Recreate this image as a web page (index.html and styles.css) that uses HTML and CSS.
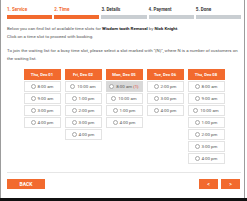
FILE: index.html
```html
<!DOCTYPE html>
<html>
<head>
<meta charset="utf-8">
<link rel="stylesheet" href="styles.css">
</head>
<body>
<div class="panel">
  <div class="steps">
    <div class="step done"><span class="label">1. Service</span><span class="bar"></span></div>
    <div class="step done"><span class="label">2. Time</span><span class="bar"></span></div>
    <div class="step"><span class="label">3. Details</span><span class="bar"></span></div>
    <div class="step"><span class="label">4. Payment</span><span class="bar"></span></div>
    <div class="step"><span class="label">5. Done</span><span class="bar"></span></div>
  </div>
  <p class="text">Below you can find list of available time slots for <b>Wisdom tooth Removal</b> by <b>Nick Knight</b>.<br>Click on a time slot to proceed with booking.</p>
  <p class="text">To join the waiting list for a busy time slot, please select a slot marked with "(N)", where N is a number of customers on the waiting list.</p>
  <div class="columns">
    <div class="col">
      <div class="day">Thu, Dec 01</div>
      <div class="slot"><span class="radio"></span>8:00 am</div>
      <div class="slot"><span class="radio"></span>9:00 am</div>
      <div class="slot"><span class="radio"></span>3:00 pm</div>
      <div class="slot"><span class="radio"></span>4:00 pm</div>
    </div>
    <div class="col">
      <div class="day">Fri, Dec 02</div>
      <div class="slot"><span class="radio"></span>10:00 am</div>
      <div class="slot"><span class="radio"></span>1:00 pm</div>
      <div class="slot"><span class="radio"></span>2:00 pm</div>
      <div class="slot"><span class="radio"></span>3:00 pm</div>
      <div class="slot"><span class="radio"></span>4:00 pm</div>
    </div>
    <div class="col">
      <div class="day">Mon, Dec 05</div>
      <div class="slot busy"><span class="radio"></span>8:00 am <span class="count">(1)</span></div>
      <div class="slot"><span class="radio"></span>10:00 am</div>
      <div class="slot"><span class="radio"></span>1:00 pm</div>
      <div class="slot"><span class="radio"></span>4:00 pm</div>
    </div>
    <div class="col">
      <div class="day">Tue, Dec 06</div>
      <div class="slot"><span class="radio"></span>2:00 pm</div>
      <div class="slot"><span class="radio"></span>3:00 pm</div>
      <div class="slot"><span class="radio"></span>4:00 pm</div>
    </div>
    <div class="col">
      <div class="day">Thu, Dec 08</div>
      <div class="slot"><span class="radio"></span>8:00 am</div>
      <div class="slot"><span class="radio"></span>9:00 am</div>
      <div class="slot"><span class="radio"></span>10:00 am</div>
      <div class="slot"><span class="radio"></span>1:00 pm</div>
      <div class="slot"><span class="radio"></span>2:00 pm</div>
      <div class="slot"><span class="radio"></span>3:00 pm</div>
      <div class="slot"><span class="radio"></span>4:00 pm</div>
    </div>
  </div>
  <div class="rule"></div>
  <div class="footer">
    <div class="btn back">BACK</div>
    <div class="nav">
      <div class="btn arrow">&lt;</div>
      <div class="btn arrow">&gt;</div>
    </div>
  </div>
</div>
<div class="bottom-bar"></div>
</body>
</html>
```
FILE: styles.css
```css
html, body {
  margin: 0;
  padding: 0;
  background: #fff;
}
body {
  width: 247px;
  height: 201px;
  overflow: hidden;
  font-family: Roboto, "Liberation Sans", Arial, sans-serif;
}
.panel {
  box-sizing: border-box;
  width: 245px;
  height: 198px;
  border-left: 1px solid #9c9c9c;
  border-right: 1px solid #9c9c9c;
  padding: 6px 3px 0 6px;
}
.steps {
  display: flex;
  gap: 2px;
}
.step {
  flex: 1;
  display: flex;
  flex-direction: column;
}
.label {
  font-size: 4.5px;
  line-height: 8px;
  font-weight: 700;
  color: #3a3a3a;
  white-space: nowrap;
}
.step.done .label {
  color: #f26a2e;
}
.bar {
  display: block;
  height: 4px;
  margin-top: 1px;
  background: #c9ced2;
}
.step.done .bar {
  background: #f26a2e;
}
.text {
  margin: 6px 0 0;
  font-size: 4.4px;
  line-height: 8px;
  color: #555;
}
.text b {
  color: #222;
}
.columns {
  display: flex;
  justify-content: center;
  align-items: flex-start;
  gap: 4px;
  margin-top: 6px;
}
.col {
  width: 37px;
  display: flex;
  flex-direction: column;
  gap: 1px;
}
.day {
  height: 11px;
  background: #f26a2e;
  color: #fff;
  font-weight: 700;
  font-size: 4.2px;
  display: flex;
  align-items: center;
  justify-content: center;
  white-space: nowrap;
}
.slot {
  box-sizing: border-box;
  height: 11px;
  border: 1px solid #e3e3e3;
  display: flex;
  align-items: center;
  justify-content: center;
  gap: 2px;
  font-size: 4.4px;
  color: #555;
  white-space: nowrap;
}
.slot.busy {
  background: #d9d9d9;
  border-color: #d9d9d9;
}
.count {
  color: #e0392b;
  margin-left: -1px;
}
.radio {
  box-sizing: border-box;
  width: 5px;
  height: 5px;
  border: 0.7px solid #a8a8a8;
  border-radius: 50%;
  background: #fff;
  flex: none;
}
.rule {
  margin-top: 8px;
  border-top: 1px solid #e6e6e6;
}
.footer {
  display: flex;
  justify-content: space-between;
  margin-top: 6px;
}
.btn {
  height: 10px;
  background: #f26a2e;
  color: #fff;
  font-weight: 700;
  font-size: 5px;
  display: flex;
  align-items: center;
  justify-content: center;
}
.back {
  width: 38px;
}
.nav {
  display: flex;
  gap: 3px;
  margin-right: 1px;
}
.arrow {
  width: 19px;
}
.bottom-bar {
  height: 3px;
  background: #111;
}
```
